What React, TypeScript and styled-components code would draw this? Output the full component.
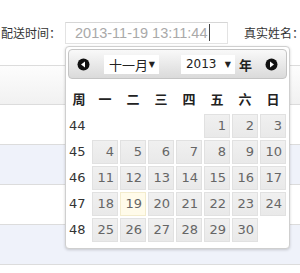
import styled, { createGlobalStyle } from "styled-components";

const GlobalStyle = createGlobalStyle`
  html, body {
    margin: 0;
    padding: 0;
    background: #fff;
    overflow: hidden;
  }
  body {
    font-family: "Noto Sans CJK SC", "Noto Sans", sans-serif;
    color: #333;
  }
`;

const Page = styled.div`
  position: relative;
  width: 300px;
  height: 273px;
  overflow: hidden;
`;

const FormRow = styled.div`
  display: flex;
  align-items: center;
  height: 65px;
  white-space: nowrap;
`;

const Label = styled.span<{ $width?: number }>`
  display: inline-block;
  flex-shrink: 0;
  width: ${(p) => (p.$width ? `${p.$width}px` : "auto")};
  padding-left: 1px;
  font-size: 12px;
  line-height: 16px;
  color: #333;
`;

const TextInput = styled.div`
  display: flex;
  flex-shrink: 0;
  align-items: center;
  box-sizing: border-box;
  width: 163px;
  height: 22px;
  margin-right: 15px;
  padding-left: 9px;
  border: 1px solid #e3e3e3;
  border-top-color: #d6d6d6;
  font-family: "Liberation Sans", Arial, sans-serif;
  font-size: 14.5px;
  color: #a9a9a9;
`;

const Caret = styled.span`
  display: inline-block;
  width: 1px;
  height: 17px;
  margin-left: 1px;
  background: #444;
`;

const Table = styled.div`
  display: flex;
  flex-direction: column;
`;

const Row = styled.div<{ $tone: "head" | "plain" | "blue" }>`
  height: ${(p) => (p.$tone === "head" ? 38 : 39)}px;
  border-bottom: 1px solid #dcdcdc;
  border-top: ${(p) => (p.$tone === "head" ? "1px solid #dcdcdc" : "none")};
  background: ${(p) =>
    p.$tone === "head"
      ? "linear-gradient(#fdfdfd, #f1f1f1)"
      : p.$tone === "blue"
      ? "#eff2fa"
      : "#fff"};
`;

const Popup = styled.div`
  position: absolute;
  left: 65px;
  top: 46px;
  box-sizing: border-box;
  width: 225px;
  height: 203px;
  padding: 2px;
  background: #fff;
  border: 1px solid #cfcfcf;
  border-radius: 4px;
  box-shadow: 0 1px 3px rgba(0, 0, 0, 0.18);
`;

const Header = styled.div`
  display: flex;
  align-items: center;
  box-sizing: border-box;
  height: 30px;
  padding: 0 8px 0 8px;
  border: 1px solid #c4c4c4;
  border-radius: 4px;
  background: linear-gradient(#f9f9f9, #dadada);
`;

const NavButton = styled.span<{ $gap: number }>`
  display: inline-flex;
  width: 13px;
  height: 13px;
  margin-right: ${(p) => p.$gap}px;
`;

const FakeSelect = styled.div<{ $width: number; $gap: number }>`
  display: flex;
  align-items: center;
  justify-content: space-between;
  box-sizing: border-box;
  width: ${(p) => p.$width}px;
  height: 19px;
  margin-right: ${(p) => p.$gap}px;
  padding: 0 4px 0 5px;
  background: #fff;
  font-size: 13px;
  color: #222;
`;

const YearText = styled.span`
  font-family: "DejaVu Sans", Verdana, sans-serif;
  font-size: 12px;
`;

const Caret2 = styled.span`
  font-size: 8px;
  color: #222;
  font-family: "DejaVu Sans", sans-serif;
`;

const YearLabel = styled.span`
  font-size: 13px;
  font-weight: bold;
  color: #222;
  margin-right: 13px;
`;

const Grid = styled.div`
  display: grid;
  grid-template-columns: 22px repeat(7, 26px);
  grid-template-rows: 28px repeat(5, 24px);
  column-gap: 2px;
  row-gap: 2px;
  margin-top: 5px;
`;

const WeekHead = styled.div`
  display: flex;
  align-items: center;
  justify-content: center;
  font-size: 13px;
  font-weight: bold;
  color: #222;
`;

const WeekNo = styled.div`
  padding-left: 1px;
  font-family: "DejaVu Sans", Verdana, sans-serif;
  font-size: 13px;
  line-height: 24px;
  color: #333;
`;

const Day = styled.div<{ $today?: boolean }>`
  box-sizing: border-box;
  padding-right: 3px;
  text-align: right;
  font-family: "DejaVu Sans", Verdana, sans-serif;
  font-size: 13px;
  line-height: 22px;
  color: #666;
  border: 1px solid ${(p) => (p.$today ? "#f3eccd" : "#e1e1e1")};
  background: ${(p) =>
    p.$today ? "#fffbea" : "linear-gradient(#f0f0f0, #e9e9e9)"};
`;

const Empty = styled.div``;

function Arrow({ dir }: { dir: "prev" | "next" }) {
  const tri = dir === "prev" ? "M8 3.5 L4 6.5 L8 9.5 Z" : "M5 3.5 L9 6.5 L5 9.5 Z";
  return (
    <svg width="13" height="13" viewBox="0 0 13 13">
      <circle cx="6.5" cy="6.5" r="6" fill="#111" />
      <path d={tri} fill="#fff" />
    </svg>
  );
}

const weekdays = ["周", "一", "二", "三", "四", "五", "六", "日"];

const weeks: { no: number; days: (number | null)[] }[] = [
  { no: 44, days: [null, null, null, null, 1, 2, 3] },
  { no: 45, days: [4, 5, 6, 7, 8, 9, 10] },
  { no: 46, days: [11, 12, 13, 14, 15, 16, 17] },
  { no: 47, days: [18, 19, 20, 21, 22, 23, 24] },
  { no: 48, days: [25, 26, 27, 28, 29, 30, null] },
];

export default function App() {
  return (
    <Page>
      <GlobalStyle />
      <FormRow>
        <Label $width={64}>配送时间：</Label>
        <TextInput>
          2013-11-19 13:11:44
          <Caret />
        </TextInput>
        <Label>真实姓名：</Label>
      </FormRow>
      <Table>
        <Row $tone="head" />
        <Row $tone="plain" />
        <Row $tone="blue" />
        <Row $tone="plain" />
        <Row $tone="blue" />
        <Row $tone="plain" />
      </Table>

      <Popup>
        <Header>
          <NavButton $gap={14}>
            <Arrow dir="prev" />
          </NavButton>
          <FakeSelect $width={57} $gap={22}>
            <span>十一月</span>
            <Caret2>▼</Caret2>
          </FakeSelect>
          <FakeSelect $width={56} $gap={4}>
            <YearText>2013</YearText>
            <Caret2>▼</Caret2>
          </FakeSelect>
          <YearLabel>年</YearLabel>
          <NavButton $gap={0}>
            <Arrow dir="next" />
          </NavButton>
        </Header>
        <Grid>
          {weekdays.map((w) => (
            <WeekHead key={w}>{w}</WeekHead>
          ))}
          {weeks.map((wk) => [
            <WeekNo key={`w${wk.no}`}>{wk.no}</WeekNo>,
            ...wk.days.map((d, i) =>
              d === null ? (
                <Empty key={`${wk.no}-${i}`} />
              ) : (
                <Day key={`${wk.no}-${i}`} $today={d === 19}>
                  {d}
                </Day>
              )
            ),
          ])}
        </Grid>
      </Popup>
    </Page>
  );
}
